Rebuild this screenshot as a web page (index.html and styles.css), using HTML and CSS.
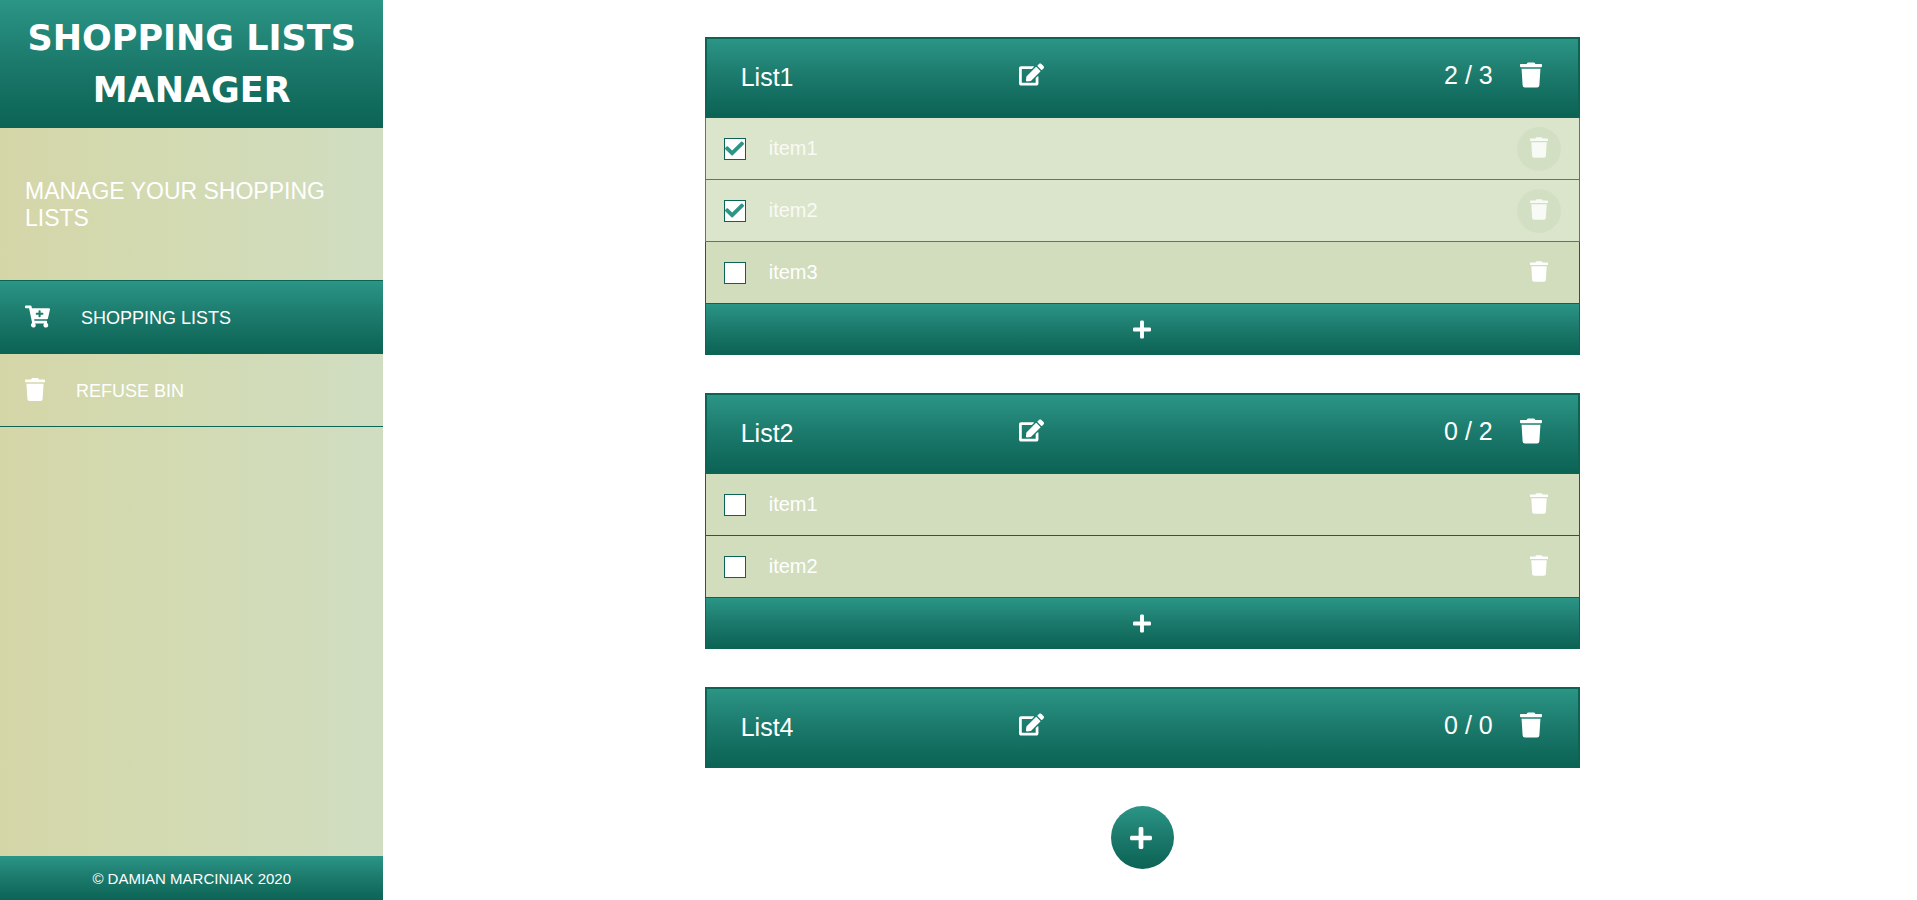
FILE: index.html
```html
<!DOCTYPE html>
<html lang="en">
<head>
<meta charset="utf-8">
<meta name="viewport" content="width=device-width, initial-scale=1">
<title>Shopping Lists Manager</title>
<link rel="stylesheet" href="styles.css">
</head>
<body>
<svg class="sprite" aria-hidden="true">
  <symbol id="trash" viewBox="0 0 448 512"><path d="M432 32H312l-9.4-18.7A24 24 0 0 0 281.1 0H166.8a23.72 23.72 0 0 0-21.4 13.3L136 32H16A16 16 0 0 0 0 48v32a16 16 0 0 0 16 16h416a16 16 0 0 0 16-16V48a16 16 0 0 0-16-16zM32 128l21.2 339a48 48 0 0 0 47.9 45h245.8a48 48 0 0 0 47.9-45L416 128z"/></symbol>
  <symbol id="plus" viewBox="0 0 448 512"><path d="M416 208H272V64c0-17.67-14.33-32-32-32h-32c-17.67 0-32 14.33-32 32v144H32c-17.67 0-32 14.33-32 32v32c0 17.67 14.33 32 32 32h144v144c0 17.67 14.33 32 32 32h32c17.67 0 32-14.33 32-32V304h144c17.67 0 32-14.33 32-32v-32c0-17.67-14.33-32-32-32z"/></symbol>
  <symbol id="check" viewBox="0 0 512 512"><path d="M173.898 439.404l-166.4-166.4c-9.997-9.997-9.997-26.206 0-36.204l36.203-36.204c9.997-9.998 26.207-9.998 36.204 0L192 312.69 432.095 72.596c9.997-9.997 26.207-9.997 36.204 0l36.203 36.204c9.997 9.997 9.997 26.206 0 36.204l-294.4 294.401c-9.998 9.997-26.207 9.997-36.204-.001z"/></symbol>
  <symbol id="edit" viewBox="0 0 576 512"><path d="M402.6 83.2l90.2 90.2c3.8 3.8 3.8 10 0 13.8L274.4 405.6l-92.8 10.3c-12.4 1.4-22.9-9.1-21.5-21.5l10.3-92.8L388.8 83.2c3.8-3.8 10-3.8 13.8 0zm162-22.9l-48.8-48.8c-15.2-15.2-39.9-15.2-55.2 0l-35.4 35.4c-3.8 3.8-3.8 10 0 13.8l90.2 90.2c3.8 3.8 10 3.8 13.8 0l35.4-35.4c15.2-15.3 15.2-40 0-55.2zM384 346.2V448H64V128h229.8c3.2 0 6.2-1.3 8.5-3.5l40-40c7.6-7.6 2.2-20.5-8.5-20.5H48C21.5 64 0 85.5 0 112v352c0 26.5 21.5 48 48 48h352c26.5 0 48-21.5 48-48V306.2c0-10.7-12.9-16-20.5-8.5l-40 40c-2.2 2.3-3.5 5.3-3.5 8.5z"/></symbol>
  <symbol id="cart" viewBox="0 0 576 512"><path d="M504.717 320H211.572l6.545 32h268.418c15.401 0 26.816 14.301 23.403 29.319l-5.517 24.276C523.112 414.668 536 433.828 536 456c0 31.202-25.519 56.444-56.824 55.994-29.823-.429-54.35-24.631-55.155-54.447-.44-16.287 6.085-31.049 16.803-41.548H231.176C241.553 426.165 248 440.326 248 456c0 31.813-26.528 57.431-58.67 55.938-28.54-1.325-51.751-24.385-53.251-52.917-1.158-22.034 10.436-41.455 28.051-51.586L93.883 64H24C10.745 64 0 53.255 0 40V24C0 10.745 10.745 0 24 0h102.529c11.401 0 21.228 8.021 23.513 19.19L159.208 64H551.99c15.401 0 26.816 14.301 23.403 29.319l-47.273 208C525.637 312.246 515.923 320 504.717 320zM408 168h-48v-40c0-8.837-7.163-16-16-16h-16c-8.837 0-16 7.163-16 16v40h-48c-8.837 0-16 7.163-16 16v16c0 8.837 7.163 16 16 16h48v40c0 8.837 7.163 16 16 16h16c8.837 0 16-7.163 16-16v-40h48c8.837 0 16-7.163 16-16v-16c0-8.837-7.163-16-16-16z"/></symbol>
</svg>
<div class="app">
  <aside class="sidebar">
    <header class="brand"><h1>SHOPPING LISTS MANAGER</h1></header>
    <p class="tagline">MANAGE YOUR SHOPPING LISTS</p>
    <nav class="nav">
      <a class="nav-link active" href="#lists"><svg class="icon wide"><use href="#cart"/></svg><span>SHOPPING LISTS</span></a>
      <a class="nav-link" href="#bin"><svg class="icon nav-trash"><use href="#trash"/></svg><span>REFUSE BIN</span></a>
    </nav>
    <footer class="footer">© DAMIAN MARCINIAK 2020</footer>
  </aside>
  <main class="main">
    <section class="list">
      <header class="list-head">
        <h2>List1</h2>
        <div class="edit"><button type="button" aria-label="Edit List1"><svg class="icon wide"><use href="#edit"/></svg></button></div>
        <div class="status"><span>2 / 3</span><button type="button" aria-label="Delete List1"><svg class="icon large"><use href="#trash"/></svg></button></div>
      </header>
      <ul class="items">
        <li class="item done"><span class="box"><input type="checkbox" id="a1" checked><svg class="tick"><use href="#check"/></svg></span><label for="a1">item1</label><button class="remove" type="button" aria-label="Delete item1"><svg class="icon small"><use href="#trash"/></svg></button></li>
        <li class="item done"><span class="box"><input type="checkbox" id="a2" checked><svg class="tick"><use href="#check"/></svg></span><label for="a2">item2</label><button class="remove" type="button" aria-label="Delete item2"><svg class="icon small"><use href="#trash"/></svg></button></li>
        <li class="item"><span class="box"><input type="checkbox" id="a3"><svg class="tick"><use href="#check"/></svg></span><label for="a3">item3</label><button class="remove" type="button" aria-label="Delete item3"><svg class="icon small"><use href="#trash"/></svg></button></li>
      </ul>
      <button class="add-item" type="button" aria-label="Add item to List1"><svg class="icon small"><use href="#plus"/></svg></button>
    </section>
    <section class="list">
      <header class="list-head">
        <h2>List2</h2>
        <div class="edit"><button type="button" aria-label="Edit List2"><svg class="icon wide"><use href="#edit"/></svg></button></div>
        <div class="status"><span>0 / 2</span><button type="button" aria-label="Delete List2"><svg class="icon large"><use href="#trash"/></svg></button></div>
      </header>
      <ul class="items">
        <li class="item"><span class="box"><input type="checkbox" id="b1"><svg class="tick"><use href="#check"/></svg></span><label for="b1">item1</label><button class="remove" type="button" aria-label="Delete item1"><svg class="icon small"><use href="#trash"/></svg></button></li>
        <li class="item"><span class="box"><input type="checkbox" id="b2"><svg class="tick"><use href="#check"/></svg></span><label for="b2">item2</label><button class="remove" type="button" aria-label="Delete item2"><svg class="icon small"><use href="#trash"/></svg></button></li>
      </ul>
      <button class="add-item" type="button" aria-label="Add item to List2"><svg class="icon small"><use href="#plus"/></svg></button>
    </section>
    <section class="list">
      <header class="list-head">
        <h2>List4</h2>
        <div class="edit"><button type="button" aria-label="Edit List4"><svg class="icon wide"><use href="#edit"/></svg></button></div>
        <div class="status"><span>0 / 0</span><button type="button" aria-label="Delete List4"><svg class="icon large"><use href="#trash"/></svg></button></div>
      </header>
    </section>
    <button class="add-list" type="button" aria-label="Add list"><svg class="icon large"><use href="#plus"/></svg></button>
  </main>
</div>
</body>
</html>
```

FILE: styles.css
```css
:root {
  --green: linear-gradient(#2b9586, #1b796b 50%, #0b6354);
  --dark: #0c6455;
  --row: #d1ddbd;
}

* {
  box-sizing: border-box;
  margin: 0;
  padding: 0;
}

body {
  background: #fff;
  color: #fff;
  font-family: "Liberation Sans", Arial, sans-serif;
}

button {
  display: flex;
  align-items: center;
  justify-content: center;
  border: 0;
  background: none;
  color: inherit;
  cursor: pointer;
}

.sprite {
  display: none;
}

.icon {
  display: block;
  flex: none;
  fill: currentColor;
}

.small {
  width: 18px;
  height: 21px;
}

.large {
  width: 22px;
  height: 26px;
}

.wide {
  width: 25px;
  height: 23px;
}

.nav-trash {
  width: 20px;
  height: 23px;
}

.app {
  display: grid;
  grid-template-columns: 20% 1fr;
  min-height: 100vh;
}

.sidebar {
  display: flex;
  flex-direction: column;
  background: linear-gradient(to right, #d5d6a8, #d3dab1 40%, #d0ddc1);
}

.brand {
  padding: 12px 20px;
  background: var(--green);
  text-align: center;
}

.brand h1 {
  font: 900 35px/52px "Arial Black", "DejaVu Sans", sans-serif;
}

.tagline {
  padding: 50px 25px 48px;
  font-size: 23px;
  line-height: 27px;
}

.nav-link {
  display: flex;
  align-items: center;
  gap: 31px;
  height: 73px;
  padding: 0 25px 2px;
  border-bottom: 1px solid var(--dark);
  color: #fff;
  font-size: 18px;
  line-height: 20px;
  text-decoration: none;
}

.nav-link span {
  padding-top: 4px;
}

.nav-link.active {
  height: 74px;
  border-top: 1px solid var(--dark);
  background: var(--green);
}

.footer {
  margin-top: auto;
  padding: 14px 0 13px;
  background: var(--green);
  font-size: 15px;
  line-height: 18px;
  text-align: center;
}

.main {
  display: flex;
  flex-direction: column;
  align-items: center;
  gap: 38px;
  padding: 37px 16px 32px 0;
}

.list {
  width: 100%;
  max-width: 875px;
}

.list-head {
  display: grid;
  grid-template-columns: 25fr 10fr 37fr;
  align-items: center;
  padding: 22px 36px 23px 34px;
  border: 2px solid var(--dark);
  background: var(--green) padding-box;
}

.list-head h2 {
  font-size: 25px;
  font-weight: 400;
  line-height: 28px;
}

.edit {
  padding-bottom: 6px;
}

.status {
  display: flex;
  align-items: center;
  justify-content: flex-end;
  gap: 27px;
  padding-bottom: 4px;
  font-size: 25px;
  line-height: 28px;
}

.items {
  list-style: none;
}

.item {
  display: flex;
  align-items: center;
  height: 62px;
  padding: 0 18px;
  border: solid var(--dark);
  border-width: 0 1px 1px;
  background: var(--row);
}

.item label {
  flex: 1;
  padding: 0 0 2px 23px;
  font-size: 20px;
  line-height: 24px;
}

.item.done {
  border-color: #3d8377;
  background: #dbe5cb;
  color: #f8faf5;
}

.box {
  display: grid;
  place-items: center;
}

.box input {
  grid-area: 1 / 1;
  appearance: none;
  width: 22px;
  height: 22px;
  border: 1px solid var(--dark);
  background: #fff;
}

.tick {
  grid-area: 1 / 1;
  display: none;
  width: 19px;
  height: 19px;
  fill: #2b9586;
  pointer-events: none;
}

.box input:checked + .tick {
  display: block;
}

.remove {
  width: 44px;
  height: 44px;
  padding-bottom: 2px;
  border-radius: 50%;
}

.done .remove {
  background: #d3dfc3;
}

.add-item {
  width: 100%;
  height: 51px;
  border: solid var(--dark);
  border-width: 0 1px 1px;
  background: var(--green) padding-box;
}

.add-list {
  width: 63px;
  height: 63px;
  padding-right: 3px;
  border-radius: 50%;
  background: var(--green);
}
```
